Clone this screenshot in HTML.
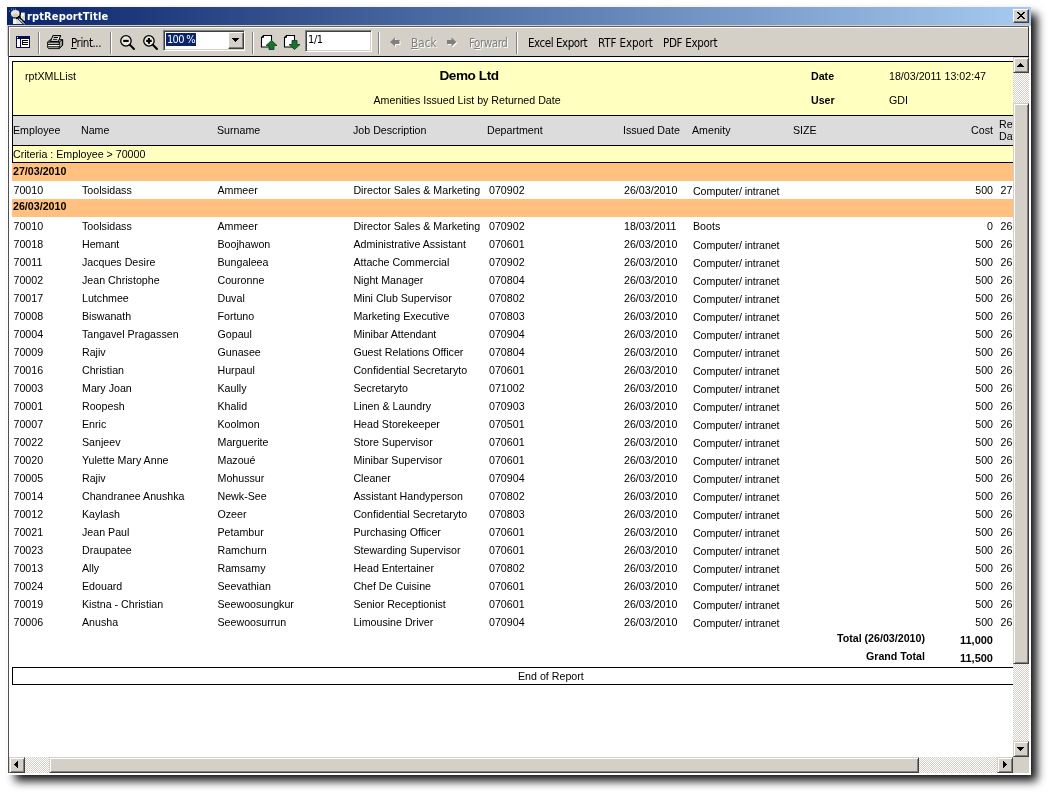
<!DOCTYPE html>
<html>
<head>
<meta charset="utf-8">
<title>rptReportTitle</title>
<style>
html,body{margin:0;padding:0;background:#fff;}
body{width:1054px;height:798px;position:relative;overflow:hidden;font-family:"Liberation Sans",sans-serif;font-size:10.67px;color:#000;}
*{box-sizing:border-box;}
.abs{position:absolute;}
#page,#tool,#title{will-change:transform;}
#shadow{position:absolute;left:15px;top:14px;width:1022px;height:767px;background:rgba(0,0,0,0.93);filter:blur(5px);}
#win{position:absolute;left:7px;top:7px;width:1024px;height:768px;background:#d4d0c8;}
#title{position:absolute;left:7px;top:7px;width:1024px;height:18px;background:linear-gradient(to right,#0a246a 0%,#a6caf0 100%);}
#title .t{position:absolute;left:20px;top:2px;color:#fff;font-family:"DejaVu Sans Condensed","DejaVu Sans","Liberation Sans",sans-serif;font-weight:bold;font-size:11px;letter-spacing:0.13px;line-height:15px;white-space:nowrap;}
#close{position:absolute;left:1013px;top:9px;width:16px;height:14px;background:#d4d0c8;border:1px solid;border-color:#fff #404040 #404040 #fff;box-shadow:inset -1px -1px 0 #808080;}
#tool{position:absolute;left:7px;top:26px;width:1024px;height:30px;background:#d4d0c8;font-size:11px;}
#tool .lbl{position:absolute;top:11px;line-height:13px;font-size:11.5px;white-space:nowrap;letter-spacing:-0.45px;font-family:"DejaVu Sans Condensed","DejaVu Sans","Liberation Sans",sans-serif;}
#tool .dis{color:#808080;text-shadow:1px 1px 0 #fff;}
#tool .sep{position:absolute;top:6px;width:2px;height:22px;border-left:1px solid #808080;border-right:1px solid #fff;}
.sunk{position:absolute;background:#fff;border:1px solid;border-color:#808080 #fff #fff #808080;box-shadow:inset 1px 1px 0 #404040,inset -1px -1px 0 #d4d0c8;}
.btn{position:absolute;background:#d4d0c8;border:1px solid;border-color:#fff #404040 #404040 #fff;box-shadow:inset -1px -1px 0 #808080;}
.sbtn{position:absolute;width:16px;height:16px;background:#d4d0c8;border:1px solid;border-color:#d4d0c8 #404040 #404040 #d4d0c8;box-shadow:inset 1px 1px 0 #fff,inset -1px -1px 0 #808080;}
.track{position:absolute;background-color:#fff;background-image:conic-gradient(#d4d0c8 25%,#fff 0 50%,#d4d0c8 0 75%,#fff 0);background-size:2px 2px;}
#view{position:absolute;left:9px;top:57px;width:1004px;height:700px;background:#fff;overflow:hidden;}
#page{position:absolute;left:-9px;top:-57px;width:1054px;height:798px;}
.r{position:absolute;left:0;width:1054px;height:14px;line-height:14px;white-space:nowrap;}
.r span{position:absolute;top:0;white-space:nowrap;}
.c1{left:13.5px}.c2{left:82px}.c3{left:217.5px}.c4{left:353.4px}.c5{left:489px}.c6{left:624px}.c7{left:693px}.c8{left:950px;width:43px;text-align:right}.c9{left:1000.5px}
.h{position:absolute;white-space:nowrap;line-height:14px;}
.b{font-weight:bold;}
</style>
</head>
<body>
<div id="shadow"></div>
<div id="win"></div>
<div id="title"><svg class="abs" style="left:0px;top:1px" width="19" height="17" viewBox="0 0 19 17">
  <rect x="4" y="0.6" width="1" height="1" fill="#8ea0d8"/><rect x="6" y="0.6" width="1" height="1" fill="#8ea0d8"/><rect x="8" y="0.6" width="1" height="1" fill="#8ea0d8"/><rect x="2" y="2.6" width="1" height="1" fill="#8ea0d8"/>
  <ellipse cx="8.3" cy="5.6" rx="4.4" ry="3.6" fill="#e4e4ec"/>
  <ellipse cx="8.6" cy="7.2" rx="2.8" ry="1.8" fill="#e8c890"/>
  <path d="M6 10.5 L10 10.5 L15.5 16 L6 16 Z" fill="#f4f4e4"/>
  <path d="M9 11 L15 16 L9.5 16 Z" fill="#d8d8d0"/>
  <rect x="13.8" y="4.6" width="4" height="8" fill="#f4f8ee"/>
  <rect x="14.5" y="8" width="3" height="4.6" fill="#cfe0c0"/>
  <path d="M13.3 4 L13.3 7" stroke="#000" stroke-width="1.2"/>
  <path d="M9.3 10.8 L12.8 8" stroke="#000" stroke-width="1.6"/>
  <path d="M12.6 9.5 L18 14.6" stroke="#000" stroke-width="1.2"/>
  <path d="M11.8 10.6 L17.6 16" stroke="#fff" stroke-width="1"/>
</svg><span class="t">rptReportTitle</span></div>
<div id="close"><svg class="abs" style="left:3px;top:2px" width="8" height="7" viewBox="0 0 8 7" shape-rendering="crispEdges"><path d="M0 0h2v1h-2z M6 0h2v1h-2z M1 1h2v1h-2z M5 1h2v1h-2z M2 2h4v1h-4z M3 3h2v1h-2z M2 4h4v1h-4z M1 5h2v1h-2z M5 5h2v1h-2z M0 6h2v1h-2z M6 6h2v1h-2z" fill="#000"/></svg></div>
<!-- frame lines -->
<div class="abs" style="left:7px;top:26px;width:1px;height:749px;background:#fff"></div>
<div class="abs" style="left:8px;top:26px;width:1021px;height:1px;background:#606060"></div>
<div class="abs" style="left:8px;top:26px;width:1px;height:749px;background:#505050"></div>
<div class="abs" style="left:9px;top:56px;width:1020px;height:1px;background:#000"></div>
<div id="tool">
    <!-- TOC icon -->
    <svg class="abs" style="left:9px;top:10px" width="14" height="13" viewBox="0 0 14 13" shape-rendering="crispEdges">
      <rect x="0" y="0" width="14" height="12" fill="#0a0a50"/>
      <rect x="1" y="3" width="3" height="8" fill="#fff"/>
      <rect x="5" y="3" width="8" height="8" fill="#fff"/>
      <rect x="1" y="1" width="1" height="1" fill="#fff"/>
      <rect x="6" y="4" width="6" height="1" fill="#000"/>
      <rect x="6" y="6" width="6" height="1" fill="#000"/>
      <rect x="6" y="8" width="6" height="1" fill="#000"/>
      <rect x="6" y="4" width="1" height="5" fill="#000"/>
    </svg>
    <div class="sep" style="left:31px"></div>
    <!-- printer icon -->
    <svg class="abs" style="left:40px;top:9px" width="17" height="15" viewBox="0 0 17 15">
      <path d="M0.6 7 L3.4 4.6 L15.6 4.6 L15.6 10 L12.2 13.6 L1.6 13.6 L0.6 12.4 Z" fill="#d4d0c8" stroke="#000" stroke-width="0.9" stroke-linejoin="round"/>
      <path d="M12.2 7 L15.6 4.6 L15.6 10 L12.2 13.6 Z" fill="#9a9a9a" stroke="#000" stroke-width="1"/>
      <path d="M0.6 7.1 L12.2 7.1" stroke="#000" stroke-width="1.1"/>
      <rect x="1.2" y="9.9" width="11" height="1.5" fill="#fff"/>
      <path d="M0.8 9.4 L12.2 9.4 M0.8 11.8 L12.2 11.8" stroke="#000" stroke-width="1"/>
      <path d="M6 0.6 L13.6 0.6 L11.4 6.4 L3.4 6.4 Z" fill="#fff" stroke="#000" stroke-width="1.1" stroke-linejoin="round"/>
      <path d="M6.6 2.5 L11 2.5 M5.8 4.3 L10.4 4.3" stroke="#000" stroke-width="1"/>
    </svg>
    <span class="lbl" style="left:64px"><u>P</u>rint...</span>
    <div class="sep" style="left:103px"></div>
    <!-- zoom out -->
    <svg class="abs" style="left:112px;top:8px" width="17" height="17" viewBox="0 0 17 17">
      <path d="M10.8 10.8 L15 15" stroke="#000" stroke-width="2" stroke-linecap="round"/>
      <circle cx="6.95" cy="6.9" r="5.2" fill="#eceae4" stroke="#000" stroke-width="1.3"/>
      <path d="M4.2 6.9 L9.7 6.9" stroke="#000" stroke-width="2.1"/>
    </svg>
    <!-- zoom in -->
    <svg class="abs" style="left:135px;top:8px" width="17" height="17" viewBox="0 0 17 17">
      <path d="M10.8 10.8 L15 15" stroke="#000" stroke-width="2" stroke-linecap="round"/>
      <circle cx="6.95" cy="6.9" r="5.2" fill="#eceae4" stroke="#000" stroke-width="1.3"/>
      <path d="M4.2 6.9 L9.7 6.9 M6.95 4.1 L6.95 9.7" stroke="#000" stroke-width="2.1"/>
    </svg>
    <!-- combo -->
    <div class="sunk" style="left:156px;top:4px;width:82px;height:21px">
      <span class="abs" style="left:2px;top:2px;width:30px;height:13px;background:#0a246a;color:#fff;line-height:13px;padding-left:1px;font-size:11px;letter-spacing:-0.7px;white-space:nowrap;font-family:'DejaVu Sans Condensed','DejaVu Sans',sans-serif">100 %</span>
      <div class="btn" style="left:64px;top:1px;width:16px;height:17px">
        <svg class="abs" style="left:3px;top:5px" width="7" height="4" viewBox="0 0 7 4" shape-rendering="crispEdges"><path d="M0 0 L7 0 L3.5 4 Z" fill="#000"/></svg>
      </div>
    </div>
    <div class="sep" style="left:245px"></div>
    <!-- page up -->
    <svg class="abs" style="left:253px;top:8px" width="18" height="16" viewBox="0 0 18 16">
      <path d="M3.5 1.5 L11.5 1.5 L11.5 13 L1.5 13 L1.5 3.5 Z" fill="#fff" stroke="#000" stroke-width="1.1"/>
      <path d="M1.5 3.5 L3.5 3.5 L3.5 1.5" fill="none" stroke="#000" stroke-width="0.9"/>
      <path d="M11.5 6.5 L17 11.5 L14 11.5 L14 15.5 L9 15.5 L9 11.5 L6 11.5 Z" fill="#1c7030" stroke="#0c4a18" stroke-width="0.9"/>
    </svg>
    <!-- page down -->
    <svg class="abs" style="left:276px;top:8px" width="18" height="16" viewBox="0 0 18 16">
      <path d="M3.5 1.5 L11.5 1.5 L11.5 13 L1.5 13 L1.5 3.5 Z" fill="#fff" stroke="#000" stroke-width="1.1"/>
      <path d="M1.5 3.5 L3.5 3.5 L3.5 1.5" fill="none" stroke="#000" stroke-width="0.9"/>
      <path d="M9 6.5 L14 6.5 L14 10.5 L17 10.5 L11.5 15.5 L6 10.5 L9 10.5 Z" fill="#1c7030" stroke="#0c4a18" stroke-width="0.9"/>
    </svg>
    <!-- page box -->
    <div class="sunk" style="left:298px;top:4px;width:67px;height:22px">
      <span class="abs" style="left:2px;top:2px;line-height:13px;font-size:11px;letter-spacing:-0.4px;white-space:nowrap;font-family:'DejaVu Sans Condensed','DejaVu Sans',sans-serif">1/1</span>
    </div>
    <div class="sep" style="left:371px"></div>
    <!-- back arrow -->
    <svg class="abs" style="left:382px;top:11px" width="12" height="11" viewBox="0 0 12 11">
      <path d="M1 5 L6 0.5 L6 3 L10.5 3 L10.5 7 L6 7 L6 9.5 Z" fill="#fff" transform="translate(1,1)"/>
      <path d="M1 5 L6 0.5 L6 3 L10.5 3 L10.5 7 L6 7 L6 9.5 Z" fill="#808080"/>
    </svg>
    <span class="lbl dis" style="left:404px;letter-spacing:0.1px"><u>B</u>ack</span>
    <svg class="abs" style="left:439px;top:11px" width="12" height="11" viewBox="0 0 12 11">
      <path d="M10.5 5 L5.5 0.5 L5.5 3 L1 3 L1 7 L5.5 7 L5.5 9.5 Z" fill="#fff" transform="translate(1,1)"/>
      <path d="M10.5 5 L5.5 0.5 L5.5 3 L1 3 L1 7 L5.5 7 L5.5 9.5 Z" fill="#808080"/>
    </svg>
    <span class="lbl dis" style="left:462px">F<u>o</u>rward</span>
    <div class="sep" style="left:509px"></div>
    <span class="lbl" style="left:521px">Excel Export</span>
    <span class="lbl" style="left:591px;letter-spacing:-0.1px">RTF Export</span>
    <span class="lbl" style="left:656px;letter-spacing:-0.3px">PDF Export</span>
  </div>
<!-- toolbar bevel overlays -->
<div class="abs" style="left:9px;top:27px;width:1019px;height:1px;background:#fff"></div>
<div class="abs" style="left:9px;top:27px;width:1px;height:29px;background:#fff"></div>
<div class="abs" style="left:1028px;top:26px;width:1px;height:31px;background:#404040"></div>
<div class="abs" style="left:1029px;top:26px;width:2px;height:749px;background:#fff"></div>
<div class="abs" style="left:8px;top:26px;width:1px;height:749px;background:#505050"></div>
<div class="abs" style="left:8px;top:26px;width:1021px;height:1px;background:#606060"></div>
<div class="abs" style="left:9px;top:56px;width:1020px;height:1px;background:#000"></div>
<!-- vertical scrollbar -->
<div class="track" style="left:1013px;top:57px;width:16px;height:700px"></div>
<div class="sbtn" style="left:1013px;top:57px"><svg class="abs" style="left:3px;top:5px" width="7" height="4" viewBox="0 0 7 4" shape-rendering="crispEdges"><path d="M3 0h1v1h-1z M2 1h3v1h-3z M1 2h5v1h-5z M0 3h7v1h-7z" fill="#000"/></svg></div>
<div class="sbtn" style="left:1013px;top:103px;height:561px"></div>
<div class="sbtn" style="left:1013px;top:741px"><svg class="abs" style="left:3px;top:5px" width="7" height="4" viewBox="0 0 7 4" shape-rendering="crispEdges"><path d="M0 0h7v1h-7z M1 1h5v1h-5z M2 2h3v1h-3z M3 3h1v1h-1z" fill="#000"/></svg></div>
<!-- horizontal scrollbar -->
<div class="track" style="left:9px;top:757px;width:1004px;height:16px"></div>
<div class="sbtn" style="left:9px;top:757px"><svg class="abs" style="left:4px;top:3px" width="4" height="7" viewBox="0 0 4 7" shape-rendering="crispEdges"><path d="M3 0h1v7h-1z M2 1h1v5h-1z M1 2h1v3h-1z M0 3h1v1h-1z" fill="#000"/></svg></div>
<div class="sbtn" style="left:49px;top:757px;width:870px"></div>
<div class="sbtn" style="left:997px;top:757px"><svg class="abs" style="left:5px;top:3px" width="4" height="7" viewBox="0 0 4 7" shape-rendering="crispEdges"><path d="M0 0h1v7h-1z M1 1h1v5h-1z M2 2h1v3h-1z M3 3h1v1h-1z" fill="#000"/></svg></div>
<div class="abs" style="left:1013px;top:757px;width:16px;height:16px;background:#d4d0c8"></div>
<div class="abs" style="left:8px;top:773px;width:1023px;height:2px;background:#fff"></div>
<div id="view">
  <div id="page">
      <!-- report header -->
      <div class="abs" style="left:12px;top:61px;width:1042px;height:55px;background:#ffffc0;border:1px solid #000"></div>
      <div class="abs" style="left:12px;top:116px;width:1042px;height:30px;background:#dcdcdc;border-bottom:1px solid #000;border-left:1px solid #000"></div>
      <div class="abs" style="left:12px;top:146px;width:1042px;height:17px;background:#ffffc0;border-bottom:1px solid #000;border-left:1px solid #000"></div>
      <div class="abs" style="left:12px;top:163px;width:1042px;height:18px;background:#ffc080"></div>
      <div class="abs" style="left:12px;top:199px;width:1042px;height:18px;background:#ffc080"></div>
      <span class="h" style="left:25px;top:69px">rptXMLList</span>
      <span class="h b" style="left:439.5px;top:69px;font-size:13.6px;letter-spacing:-0.45px">Demo Ltd</span>
      <span class="h" style="left:373.5px;top:93px">Amenities Issued List by Returned Date</span>
      <span class="h b" style="left:811px;top:69px">Date</span>
      <span class="h b" style="left:811px;top:93px">User</span>
      <span class="h" style="left:889px;top:69px">18/03/2011 13:02:47</span>
      <span class="h" style="left:889px;top:93px">GDI</span>
      <!-- column header -->
      <span class="h" style="left:13px;top:123px">Employee</span>
      <span class="h" style="left:81px;top:123px">Name</span>
      <span class="h" style="left:217px;top:123px">Surname</span>
      <span class="h" style="left:353px;top:123px">Job Description</span>
      <span class="h" style="left:487px;top:123px">Department</span>
      <span class="h" style="left:623px;top:123px">Issued Date</span>
      <span class="h" style="left:692px;top:123px">Amenity</span>
      <span class="h" style="left:793px;top:123px">SIZE</span>
      <span class="h" style="left:950px;width:43px;text-align:right;top:123px">Cost</span>
      <span class="h" style="left:999px;top:118px;line-height:12px">Returned<br>Date</span>
      <span class="h" style="left:13px;top:147px">Criteria : Employee &gt; 70000</span>
      <span class="h b" style="left:13px;top:164px">27/03/2010</span>
      <span class="h b" style="left:13px;top:199px">26/03/2010</span>
<div class="r" style="top:183px"><span class="c1">70010</span><span class="c2">Toolsidass</span><span class="c3">Ammeer</span><span class="c4">Director Sales &amp; Marketing</span><span class="c5">070902</span><span class="c6">26/03/2010</span><span class="c7" style="top:1px;letter-spacing:-0.1px">Computer/ intranet</span><span class="c8">500</span><span class="c9">27</span></div>
<div class="r" style="top:219px"><span class="c1">70010</span><span class="c2">Toolsidass</span><span class="c3">Ammeer</span><span class="c4">Director Sales &amp; Marketing</span><span class="c5">070902</span><span class="c6">18/03/2011</span><span class="c7">Boots</span><span class="c8">0</span><span class="c9">26</span></div>
<div class="r" style="top:237px"><span class="c1">70018</span><span class="c2">Hemant</span><span class="c3">Boojhawon</span><span class="c4">Administrative Assistant</span><span class="c5">070601</span><span class="c6">26/03/2010</span><span class="c7" style="top:1px;letter-spacing:-0.1px">Computer/ intranet</span><span class="c8">500</span><span class="c9">26</span></div>
<div class="r" style="top:255px"><span class="c1">70011</span><span class="c2">Jacques Desire</span><span class="c3">Bungaleea</span><span class="c4">Attache Commercial</span><span class="c5">070902</span><span class="c6">26/03/2010</span><span class="c7" style="top:1px;letter-spacing:-0.1px">Computer/ intranet</span><span class="c8">500</span><span class="c9">26</span></div>
<div class="r" style="top:273px"><span class="c1">70002</span><span class="c2">Jean Christophe</span><span class="c3">Couronne</span><span class="c4">Night Manager</span><span class="c5">070804</span><span class="c6">26/03/2010</span><span class="c7" style="top:1px;letter-spacing:-0.1px">Computer/ intranet</span><span class="c8">500</span><span class="c9">26</span></div>
<div class="r" style="top:291px"><span class="c1">70017</span><span class="c2">Lutchmee</span><span class="c3">Duval</span><span class="c4">Mini Club Supervisor</span><span class="c5">070802</span><span class="c6">26/03/2010</span><span class="c7" style="top:1px;letter-spacing:-0.1px">Computer/ intranet</span><span class="c8">500</span><span class="c9">26</span></div>
<div class="r" style="top:309px"><span class="c1">70008</span><span class="c2">Biswanath</span><span class="c3">Fortuno</span><span class="c4">Marketing Executive</span><span class="c5">070803</span><span class="c6">26/03/2010</span><span class="c7" style="top:1px;letter-spacing:-0.1px">Computer/ intranet</span><span class="c8">500</span><span class="c9">26</span></div>
<div class="r" style="top:327px"><span class="c1">70004</span><span class="c2">Tangavel Pragassen</span><span class="c3">Gopaul</span><span class="c4">Minibar Attendant</span><span class="c5">070904</span><span class="c6">26/03/2010</span><span class="c7" style="top:1px;letter-spacing:-0.1px">Computer/ intranet</span><span class="c8">500</span><span class="c9">26</span></div>
<div class="r" style="top:345px"><span class="c1">70009</span><span class="c2">Rajiv</span><span class="c3">Gunasee</span><span class="c4">Guest Relations Officer</span><span class="c5">070804</span><span class="c6">26/03/2010</span><span class="c7" style="top:1px;letter-spacing:-0.1px">Computer/ intranet</span><span class="c8">500</span><span class="c9">26</span></div>
<div class="r" style="top:363px"><span class="c1">70016</span><span class="c2">Christian</span><span class="c3">Hurpaul</span><span class="c4">Confidential Secretaryto</span><span class="c5">070601</span><span class="c6">26/03/2010</span><span class="c7" style="top:1px;letter-spacing:-0.1px">Computer/ intranet</span><span class="c8">500</span><span class="c9">26</span></div>
<div class="r" style="top:381px"><span class="c1">70003</span><span class="c2">Mary Joan</span><span class="c3">Kaully</span><span class="c4">Secretaryto</span><span class="c5">071002</span><span class="c6">26/03/2010</span><span class="c7" style="top:1px;letter-spacing:-0.1px">Computer/ intranet</span><span class="c8">500</span><span class="c9">26</span></div>
<div class="r" style="top:399px"><span class="c1">70001</span><span class="c2">Roopesh</span><span class="c3">Khalid</span><span class="c4">Linen &amp; Laundry</span><span class="c5">070903</span><span class="c6">26/03/2010</span><span class="c7" style="top:1px;letter-spacing:-0.1px">Computer/ intranet</span><span class="c8">500</span><span class="c9">26</span></div>
<div class="r" style="top:417px"><span class="c1">70007</span><span class="c2">Enric</span><span class="c3">Koolmon</span><span class="c4">Head Storekeeper</span><span class="c5">070501</span><span class="c6">26/03/2010</span><span class="c7" style="top:1px;letter-spacing:-0.1px">Computer/ intranet</span><span class="c8">500</span><span class="c9">26</span></div>
<div class="r" style="top:435px"><span class="c1">70022</span><span class="c2">Sanjeev</span><span class="c3">Marguerite</span><span class="c4">Store Supervisor</span><span class="c5">070601</span><span class="c6">26/03/2010</span><span class="c7" style="top:1px;letter-spacing:-0.1px">Computer/ intranet</span><span class="c8">500</span><span class="c9">26</span></div>
<div class="r" style="top:453px"><span class="c1">70020</span><span class="c2">Yulette Mary Anne</span><span class="c3">Mazoué</span><span class="c4">Minibar Supervisor</span><span class="c5">070601</span><span class="c6">26/03/2010</span><span class="c7" style="top:1px;letter-spacing:-0.1px">Computer/ intranet</span><span class="c8">500</span><span class="c9">26</span></div>
<div class="r" style="top:471px"><span class="c1">70005</span><span class="c2">Rajiv</span><span class="c3">Mohussur</span><span class="c4">Cleaner</span><span class="c5">070904</span><span class="c6">26/03/2010</span><span class="c7" style="top:1px;letter-spacing:-0.1px">Computer/ intranet</span><span class="c8">500</span><span class="c9">26</span></div>
<div class="r" style="top:489px"><span class="c1">70014</span><span class="c2">Chandranee Anushka</span><span class="c3">Newk-See</span><span class="c4">Assistant Handyperson</span><span class="c5">070802</span><span class="c6">26/03/2010</span><span class="c7" style="top:1px;letter-spacing:-0.1px">Computer/ intranet</span><span class="c8">500</span><span class="c9">26</span></div>
<div class="r" style="top:507px"><span class="c1">70012</span><span class="c2">Kaylash</span><span class="c3">Ozeer</span><span class="c4">Confidential Secretaryto</span><span class="c5">070803</span><span class="c6">26/03/2010</span><span class="c7" style="top:1px;letter-spacing:-0.1px">Computer/ intranet</span><span class="c8">500</span><span class="c9">26</span></div>
<div class="r" style="top:525px"><span class="c1">70021</span><span class="c2">Jean Paul</span><span class="c3">Petambur</span><span class="c4">Purchasing Officer</span><span class="c5">070601</span><span class="c6">26/03/2010</span><span class="c7" style="top:1px;letter-spacing:-0.1px">Computer/ intranet</span><span class="c8">500</span><span class="c9">26</span></div>
<div class="r" style="top:543px"><span class="c1">70023</span><span class="c2">Draupatee</span><span class="c3">Ramchurn</span><span class="c4">Stewarding Supervisor</span><span class="c5">070601</span><span class="c6">26/03/2010</span><span class="c7" style="top:1px;letter-spacing:-0.1px">Computer/ intranet</span><span class="c8">500</span><span class="c9">26</span></div>
<div class="r" style="top:561px"><span class="c1">70013</span><span class="c2">Ally</span><span class="c3">Ramsamy</span><span class="c4">Head Entertainer</span><span class="c5">070802</span><span class="c6">26/03/2010</span><span class="c7" style="top:1px;letter-spacing:-0.1px">Computer/ intranet</span><span class="c8">500</span><span class="c9">26</span></div>
<div class="r" style="top:579px"><span class="c1">70024</span><span class="c2">Edouard</span><span class="c3">Seevathian</span><span class="c4">Chef De Cuisine</span><span class="c5">070601</span><span class="c6">26/03/2010</span><span class="c7" style="top:1px;letter-spacing:-0.1px">Computer/ intranet</span><span class="c8">500</span><span class="c9">26</span></div>
<div class="r" style="top:597px"><span class="c1">70019</span><span class="c2">Kistna - Christian</span><span class="c3">Seewoosungkur</span><span class="c4">Senior Receptionist</span><span class="c5">070601</span><span class="c6">26/03/2010</span><span class="c7" style="top:1px;letter-spacing:-0.1px">Computer/ intranet</span><span class="c8">500</span><span class="c9">26</span></div>
<div class="r" style="top:615px"><span class="c1">70006</span><span class="c2">Anusha</span><span class="c3">Seewoosurrun</span><span class="c4">Limousine Driver</span><span class="c5">070904</span><span class="c6">26/03/2010</span><span class="c7" style="top:1px;letter-spacing:-0.1px">Computer/ intranet</span><span class="c8">500</span><span class="c9">26</span></div>
      <span class="h b" style="left:780px;width:145px;text-align:right;top:631px">Total (26/03/2010)</span>
      <span class="h b" style="left:900px;width:93px;text-align:right;top:633px;font-size:11px">11,000</span>
      <span class="h b" style="left:780px;width:145px;text-align:right;top:649px">Grand Total</span>
      <span class="h b" style="left:900px;width:93px;text-align:right;top:651px;font-size:11px">11,500</span>
      <div class="abs" style="left:12px;top:667px;width:1042px;height:18px;border:1px solid #000"></div>
      <span class="h" style="left:518px;top:669px">End of Report</span>
  </div>
</div>
</body>
</html>
